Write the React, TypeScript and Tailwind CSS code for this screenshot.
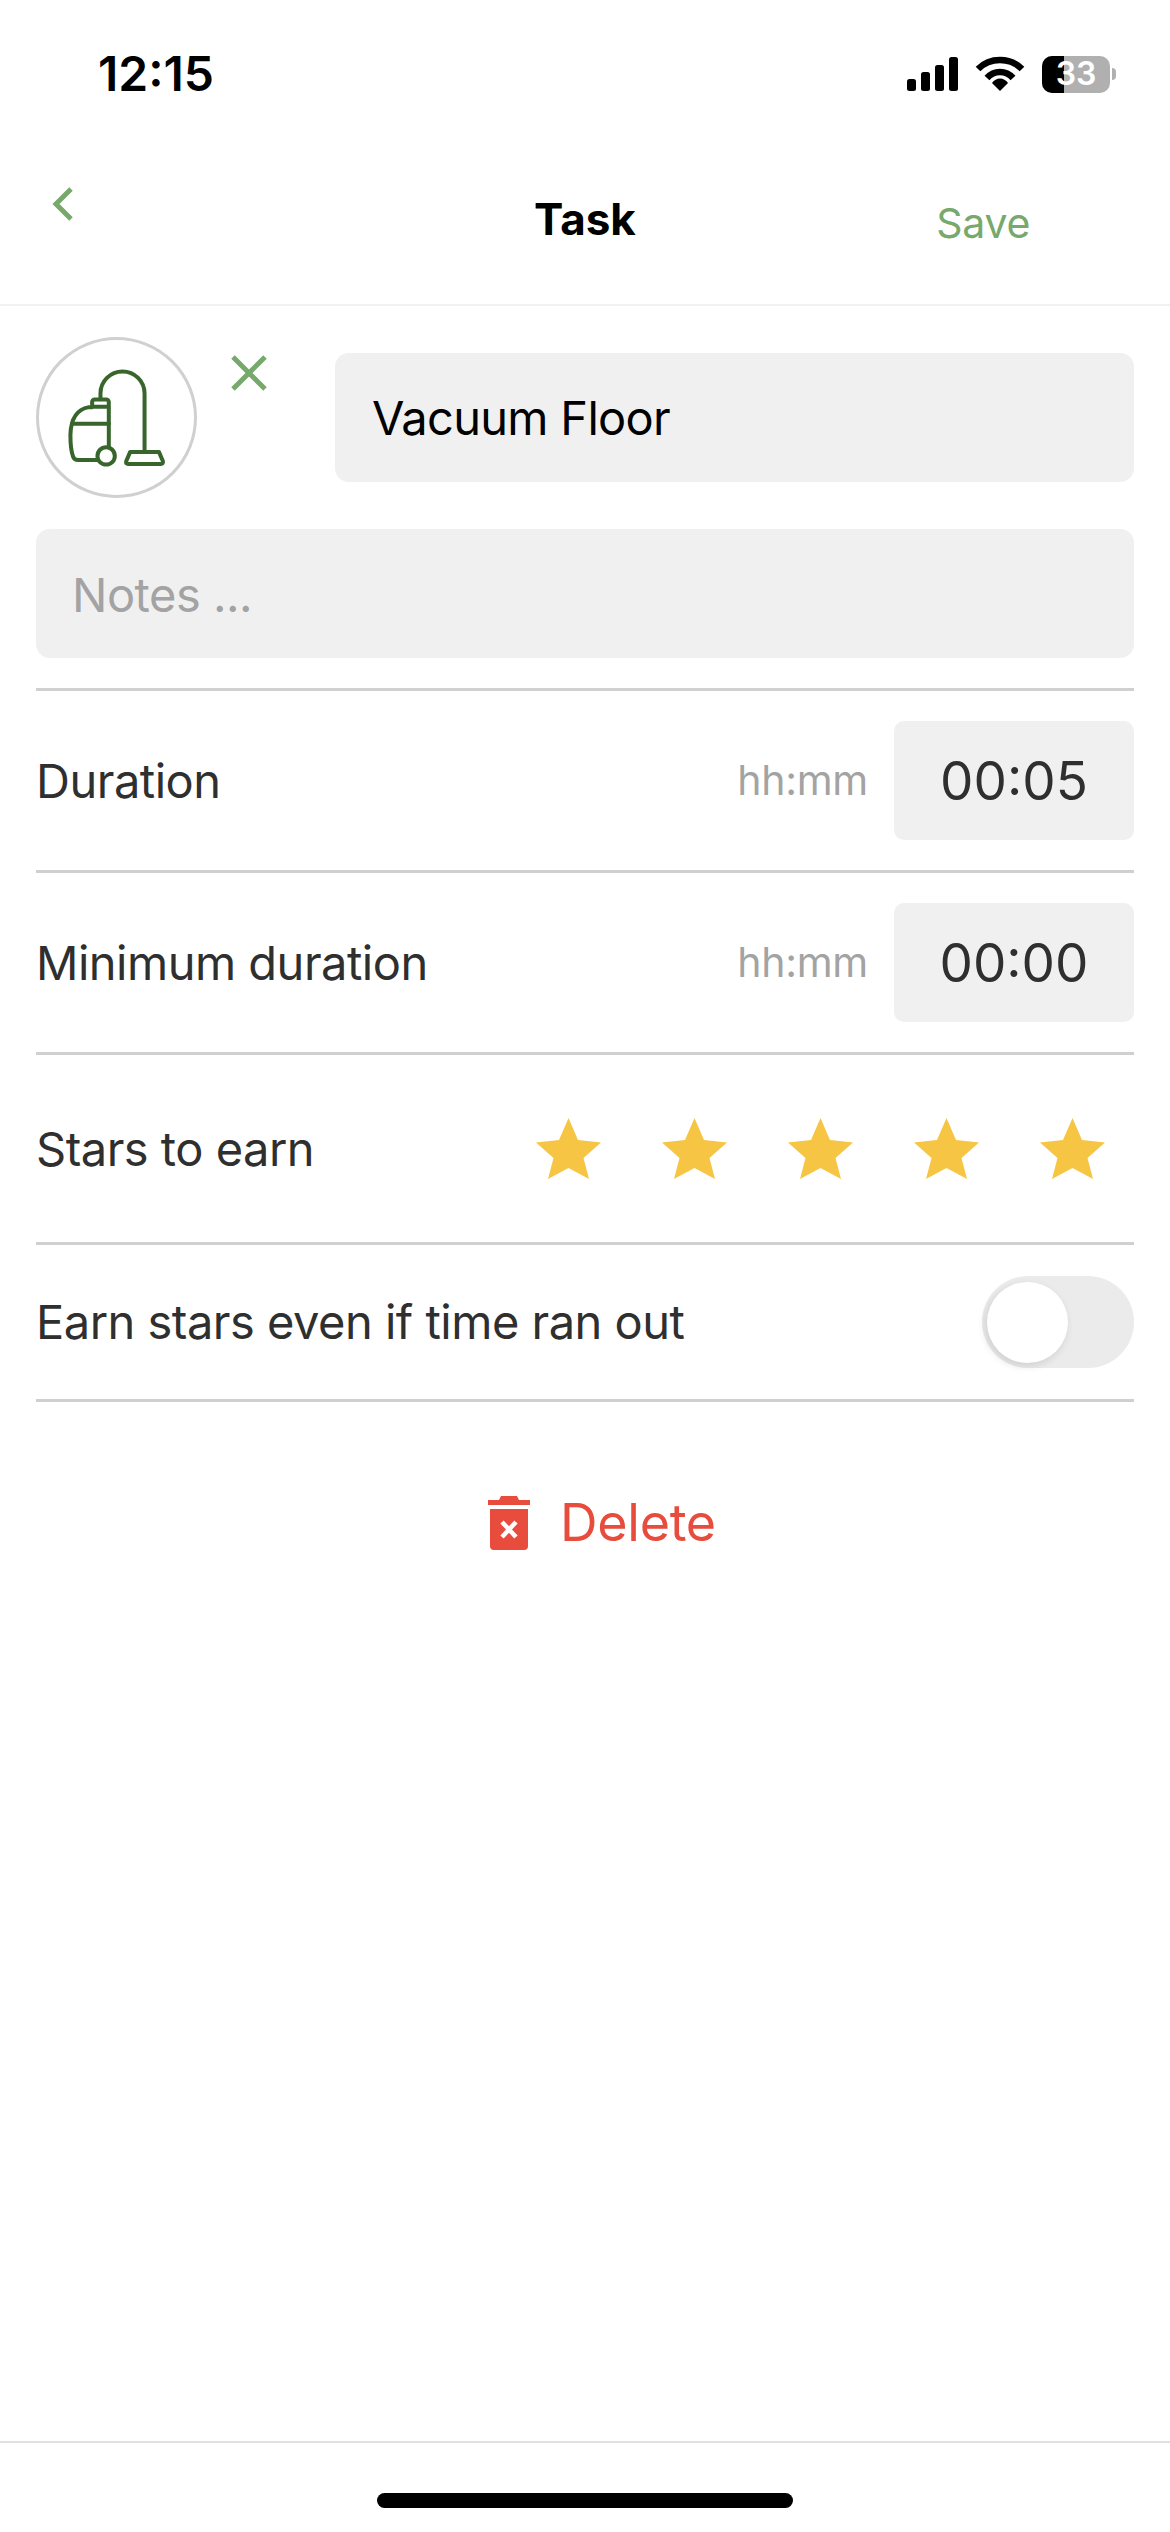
import React from 'react';

function Star() {
  return (
    <svg width="65" height="61" viewBox="0 0 65 61" className="block">
      <polygon fill="#F6C544" points="32.5,0 42,22 65,24.5 47.5,40 53,61 32.5,50 12,61 17.5,40 0,24.5 23,22" />
    </svg>
  );
}

function VacuumIcon() {
  return (
    <svg width="161" height="161" viewBox="50 52 482 482" fill="none" stroke="#37652B" strokeWidth="12" strokeLinejoin="round" strokeLinecap="round">
      <path d="M243 238 V221 A66 66 0 0 1 375 221 V395" />
      <path d="M332 396 H418 L430 424 Q431 432 424 432 H326 Q318 432 320 424 Z" />
      <rect x="218" y="239" width="50" height="22" rx="8" />
      <path d="M268 260 V382" />
      <path d="M218 262 H208 Q155 272 153 345 Q153 390 161 410 Q164 420 176 420 H234" />
      <path d="M158 312 H268" />
      <circle cx="260" cy="408" r="26" />
    </svg>
  );
}

function StatusIcons() {
  return (
    <div className="flex items-center">
      <svg width="52" height="34" viewBox="0 0 52 34" fill="#000" className="block">
        <rect x="0" y="22" width="9" height="12" rx="2.5" />
        <rect x="14" y="15" width="9" height="19" rx="2.5" />
        <rect x="28" y="8" width="9" height="26" rx="2.5" />
        <rect x="42" y="0" width="9" height="34" rx="2.5" />
      </svg>
      <svg width="50" height="36" viewBox="0 0 50 36" fill="none" className="block ml-[16px]">
        <path d="M3 13 C15 1 35 1 47 13" stroke="#000" strokeWidth="6.5" />
        <path d="M12 22 C19 14 31 14 38 22" stroke="#000" strokeWidth="6.5" />
        <path d="M17 27 C21 21 29 21 33 27 L25 35 Z" fill="#000" />
      </svg>
      <div className="relative ml-[17px] w-[68px] h-[37px] rounded-[10px] overflow-hidden bg-[#b0b0b0] flex items-center justify-center">
        <div className="absolute left-0 top-0 bottom-0 w-[22px] bg-black" />
        <span className="relative text-white text-[32px] font-semibold leading-none">33</span>
      </div>
      <div className="ml-[2px] w-[4px] h-[12px] rounded-r-full bg-[#b0b0b0]" />
    </div>
  );
}

function DurationRow({ label, value }: { label: string; value: string }) {
  return (
    <div className="flex items-center justify-between h-[182px] border-b-[3px] border-[#d0d0d0]">
      <span className="pt-[2px] text-[47px] tracking-[-0.5px] text-[#2f2f2f]">{label}</span>
      <div className="flex items-center gap-[26px]">
        <span className="text-[41px] tracking-[-0.3px] text-[#a3a3a3]">hh:mm</span>
        <div className="w-[240px] h-[119px] pt-[2px] rounded-[10px] bg-[#f0f0f0] flex items-center justify-center text-[53px] text-[#2f2f2f]">
          {value}
        </div>
      </div>
    </div>
  );
}

export default function App() {
  return (
    <div className="w-[1170px] h-[2532px] bg-white flex flex-col font-['Inter',sans-serif]">
      <div className="h-[306px] shrink-0 border-b-2 border-[#f1f1f1] flex flex-col">
        <div className="flex items-center justify-between pl-[98px] pr-[54px] pt-[50px]">
          <span className="text-[48px] font-semibold leading-[48px] text-black">12:15</span>
          <StatusIcons />
        </div>
        <div className="relative flex justify-between items-start px-[52px] mt-[89px]">
          <svg width="22" height="34" viewBox="0 0 22 34" fill="none" stroke="#76A96B" strokeWidth="5" className="block">
            <path d="M19 2 L4 17 L19 32" />
          </svg>
          <span className="absolute left-[534px] top-[10px] text-[44px] font-bold leading-none text-black">Task</span>
          <span className="mr-[88px] mt-[16px] text-[41px] tracking-[-0.3px] leading-none text-[#76A96B]">Save</span>
        </div>
      </div>

      <div className="flex-1 flex flex-col px-[36px] pt-[31px]">
        <div className="flex items-start">
          <div className="w-[161px] h-[161px] rounded-full border-[3px] border-[#d0d0d0] flex items-center justify-center shrink-0">
            <div className="-m-[3px]">
              <VacuumIcon />
            </div>
          </div>
          <svg width="36" height="36" viewBox="0 0 36 36" stroke="#76A96B" strokeWidth="5" className="block ml-[34px] mt-[18px] shrink-0">
            <path d="M2 2 L34 34 M34 2 L2 34" />
          </svg>
          <div className="ml-[68px] mt-[16px] flex-1 h-[129px] pt-[2px] rounded-[14px] bg-[#f0f0f0] flex items-center pl-[37px] text-[47px] tracking-[-0.7px] text-black">
            Vacuum Floor
          </div>
        </div>

        <div className="mt-[31px] h-[129px] pt-[3px] rounded-[14px] bg-[#f0f0f0] flex items-center pl-[36px] text-[47px] tracking-[-0.5px] text-[#a3a3a3]">
          Notes ...
        </div>
        <div className="mt-[30px] border-b-[3px] border-[#d0d0d0]" />

        <DurationRow label="Duration" value="00:05" />
        <DurationRow label="Minimum duration" value="00:00" />

        <div className="flex items-center justify-between h-[190px] border-b-[3px] border-[#d0d0d0]">
          <span className="pt-[1px] text-[47px] tracking-[-0.5px] text-[#2f2f2f]">Stars to earn</span>
          <div className="flex items-center gap-[61px] pr-[29px]">
            <Star />
            <Star />
            <Star />
            <Star />
            <Star />
          </div>
        </div>

        <div className="flex items-center justify-between h-[157px] border-b-[3px] border-[#d0d0d0]">
          <span className="text-[47px] tracking-[-0.5px] text-[#2f2f2f]">Earn stars even if time ran out</span>
          <div className="relative w-[152px] h-[92px] rounded-full bg-[#ebebeb]">
            <div className="absolute left-[5px] top-[6px] w-[81px] h-[81px] rounded-full bg-white shadow-[-2px_3px_8px_rgba(0,0,0,0.12)]" />
          </div>
        </div>

        <div className="flex items-center justify-center gap-[30px] mt-[94px] pl-[34px]">
          <svg width="42" height="54" viewBox="0 0 42 54" className="block">
            <path fill="#E74C3C" d="M13 0 H29 L31 4 H42 V9 H0 V4 H11 Z" />
            <path fill="#E74C3C" d="M2 13 H40 V50 Q40 54 36 54 H6 Q2 54 2 50 Z" />
            <path stroke="#fff" strokeWidth="4.5" d="M14 26 L28 41 M28 26 L14 41" />
          </svg>
          <span className="text-[52px] tracking-[-0.3px] leading-none text-[#E74C3C]">Delete</span>
        </div>
      </div>

      <div className="h-[91px] shrink-0 border-t-[2px] border-[#e0e0e0] flex justify-center pt-[50px]">
        <div className="w-[416px] h-[15px] rounded-full bg-black" />
      </div>
    </div>
  );
}
